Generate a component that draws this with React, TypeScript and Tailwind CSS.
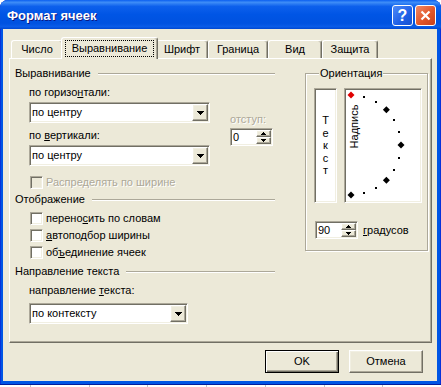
import React from "react";

const raised =
  "border border-t-white border-l-white border-r-[#716F64] border-b-[#716F64] shadow-[inset_-1px_-1px_0_#ACA899,inset_1px_1px_0_#F1EFE2]";
const sunken =
  "border border-t-[#ACA899] border-l-[#ACA899] border-r-white border-b-white shadow-[inset_1px_1px_0_#716F64,inset_-1px_-1px_0_#F1EFE2]";

const ArrowDown = () => (
  <svg width="7" height="4" viewBox="0 0 7 4" shapeRendering="crispEdges">
    <path d="M0 0H7V1H6V2H5V3H4V4H3V3H2V2H1V1H0Z" fill="#000" />
  </svg>
);

const SpinUp = () => (
  <svg width="5" height="3" viewBox="0 0 5 3" shapeRendering="crispEdges">
    <path d="M0 3H5V2H4V1H3V0H2V1H1V2H0Z" fill="#000" />
  </svg>
);

const SpinDown = () => (
  <svg width="5" height="3" viewBox="0 0 5 3" shapeRendering="crispEdges">
    <path d="M0 0H5V1H4V2H3V3H2V2H1V1H0Z" fill="#000" />
  </svg>
);

function Combo({ value, width }: { value: string; width: string }) {
  return (
    <div className={`${width} h-[21px] bg-white ${sunken} p-[1px] flex`}>
      <div className="flex-1 flex items-center pl-[1px]">{value}</div>
      <div className={`w-[16px] bg-[#ECE9D8] ${raised} flex items-center justify-center`}>
        <ArrowDown />
      </div>
    </div>
  );
}

function Spinner({ value }: { value: string }) {
  return (
    <div className={`w-[43px] h-[18px] bg-white ${sunken} p-[1px] flex`}>
      <div className="flex-1 flex items-center pl-[1px]">{value}</div>
      <div className="w-[15px] flex flex-col">
        <div className={`flex-1 bg-[#ECE9D8] ${raised} flex items-center justify-center`}>
          <SpinUp />
        </div>
        <div className={`flex-1 bg-[#ECE9D8] ${raised} flex items-center justify-center`}>
          <SpinDown />
        </div>
      </div>
    </div>
  );
}

function Check({ children, disabled }: { children: React.ReactNode; disabled?: boolean }) {
  return (
    <div className="flex items-center gap-[3px] ml-[15px]">
      <div className={`w-[13px] h-[13px] ${disabled ? "bg-[#ECE9D8]" : "bg-white"} ${sunken}`} />
      <span className={disabled ? "text-[#ACA899] [text-shadow:1px_1px_0_#fff]" : ""}>{children}</span>
    </div>
  );
}

function GroupHead({ title, gap }: { title: string; gap: string }) {
  return (
    <div className="flex items-center">
      <span>{title}</span>
      <div className={`flex-1 ${gap} border-t border-t-[#ACA899] border-b border-b-white`} />
    </div>
  );
}

const tabs = [
  { name: "Число", w: "w-[52px]" },
  { name: "Выравнивание", w: "", active: true },
  { name: "Шрифт", w: "w-[52px]" },
  { name: "Граница", w: "w-[60px]" },
  { name: "Вид", w: "w-[54px]" },
  { name: "Защита", w: "w-[56px]" },
];

function Dial() {
  const pts = [];
  for (let i = 0; i <= 12; i++) {
    const a = (i * 15 * Math.PI) / 180;
    pts.push({ x: 5 + 50 * Math.sin(a), y: 55 - 50 * Math.cos(a), big: i % 3 === 0, red: i === 0 });
  }
  return (
    <svg width="74" height="111" viewBox="0 0 74 111">
      {pts.map((p, i) =>
        p.big ? (
          <path
            key={i}
            d={`M${p.x} ${p.y - 3.5}L${p.x + 3.5} ${p.y}L${p.x} ${p.y + 3.5}L${p.x - 3.5} ${p.y}Z`}
            fill={p.red ? "#E00000" : "#000"}
          />
        ) : (
          <rect key={i} x={Math.round(p.x) - 1} y={Math.round(p.y) - 1} width="2" height="2" fill="#000" />
        )
      )}
      <text
        x="7.5"
        y="36.5"
        transform="rotate(-90 7.5 36.5)"
        textAnchor="middle"
        dominantBaseline="central"
        fontSize="11"
        fontFamily="Liberation Sans, Arial, sans-serif"
      >
        Надпись
      </text>
    </svg>
  );
}

export default function App() {
  return (
    <div className="w-[441px] h-[387px] bg-white font-['Liberation_Sans',Arial,sans-serif] text-[11px] leading-[13px] text-black select-none">
      <div className="h-[385px] flex flex-col rounded-t-[8px] bg-[#0055E5] shadow-[inset_0_-1px_0_#001C9E,inset_1px_0_0_#0831D9,inset_-1px_0_0_#0831D9]">
        {/* Title bar */}
        <div className="h-[29px] rounded-t-[8px] flex items-center pl-[7px] pr-[5px] bg-[linear-gradient(to_bottom,#0A5FF0_0%,#3E8DF7_8%,#0D60EC_22%,#0055E5_50%,#0052E0_80%,#0A5CE8_92%,#0047D0_100%)]">
          <span className="text-white font-bold text-[13px] leading-[16px] mt-[2px] [text-shadow:1px_1px_0_#0A1883]">
            Формат ячеек
          </span>
          <div className="ml-auto flex gap-[2px] mt-[2px]">
            <div className="w-[21px] h-[21px] rounded-[3px] border border-white bg-[linear-gradient(135deg,#4F8BF8,#1E5FE6_60%,#1650D0)] flex items-center justify-center text-white font-bold text-[16px] leading-none">
              ?
            </div>
            <div className="w-[21px] h-[21px] rounded-[3px] border border-white bg-[linear-gradient(135deg,#F08A66,#E2562A_55%,#C8401C)] flex items-center justify-center">
              <svg width="11" height="11" viewBox="0 0 11 11">
                <path d="M1.5 1.5L9.5 9.5M9.5 1.5L1.5 9.5" stroke="#fff" strokeWidth="2.2" />
              </svg>
            </div>
          </div>
        </div>

        {/* Client area */}
        <div className="flex-1 ml-[3px] mr-[4px] mb-[4px] bg-[#ECE9D8] flex flex-col pt-[8px] pl-[6px]">
          {/* Tabs */}
          <div className="h-[21px] flex items-end pl-[2px]">
            {tabs.map((t) =>
              t.active ? (
                <div
                  key={t.name}
                  className="w-[97px] -mx-[2px] h-[22px] -mb-[1px] relative z-10 bg-[#ECE9D8] border-l border-t border-white border-r border-r-[#716F64] rounded-t-[3px] shadow-[inset_-1px_0_0_#ACA899] flex items-center justify-center"
                >
                  <span className="h-[17px] px-[6px] flex items-center border border-dotted border-black">{t.name}</span>
                </div>
              ) : (
                <div
                  key={t.name}
                  className={`${t.w} h-[18px] border-l border-t border-white border-r border-r-[#716F64] rounded-t-[3px] shadow-[inset_-1px_0_0_#ACA899] flex items-center justify-center`}
                >
                  {t.name}
                </div>
              )
            )}
          </div>

          {/* Panel */}
          <div className="w-[423px] h-[285px] bg-[#ECE9D8] border border-t-white border-l-white border-r-[#716F64] border-b-[#716F64] shadow-[inset_-1px_-1px_0_#ACA899] flex pl-[5px] pt-[8px]">
            {/* Left column */}
            <div className="w-[260px] flex flex-col">
              <GroupHead title="Выравнивание" gap="ml-[7px]" />
              <div className="flex">
                <div className="ml-[14px] w-[181px] flex flex-col">
                  <div className="mt-[6px]">
                    по горизо<span className="underline">н</span>тали:
                  </div>
                  <div className="mt-[3px]">
                    <Combo value="по центру" width="w-[181px]" />
                  </div>
                  <div className="mt-[6px]">
                    по <span className="underline">в</span>ертикали:
                  </div>
                  <div className="mt-[3px]">
                    <Combo value="по центру" width="w-[181px]" />
                  </div>
                </div>
                <div className="ml-[20px] flex flex-col pt-[33px]">
                  <span className="text-[#ACA899] [text-shadow:1px_1px_0_#fff]">отступ:</span>
                  <div className="mt-[2px]">
                    <Spinner value="0" />
                  </div>
                </div>
              </div>
              <div className="mt-[10px]">
                <Check disabled>Распределять по ширине</Check>
              </div>

              <div className="mt-[4px]">
                <GroupHead title="Отображение" gap="ml-[7px]" />
              </div>
              <div className="mt-[6px] flex flex-col gap-[4px]">
                <Check>
                  перено<span className="underline">с</span>ить по словам
                </Check>
                <Check>
                  <span className="underline">а</span>втоподбор ширины
                </Check>
                <Check>
                  об<span className="underline">ъ</span>единение ячеек
                </Check>
              </div>

              <div className="mt-[6px]">
                <GroupHead title="Направление текста" gap="ml-[7px]" />
              </div>
              <div className="ml-[14px] mt-[6px]">
                направление <span className="underline">т</span>екста:
              </div>
              <div className="ml-[14px] mt-[6px]">
                <Combo value="по контексту" width="w-[159px]" />
              </div>
            </div>

            {/* Orientation */}
            <fieldset className="ml-[30px] w-[123px] h-[184px] border border-[#ACA899] shadow-[inset_1px_1px_0_#fff,1px_1px_0_#fff] pl-[8px] pt-[8px]">
              <legend className="ml-[5px] px-[1px] bg-[#ECE9D8]">Ориентация</legend>
              <div className="flex gap-[7px]">
                <div className={`w-[23px] h-[115px] bg-white ${sunken} flex flex-col items-center justify-center leading-[12.5px]`}>
                  <span>Т</span>
                  <span>е</span>
                  <span>к</span>
                  <span>с</span>
                  <span>т</span>
                </div>
                <div className={`w-[78px] h-[115px] bg-white ${sunken} p-[1px]`}>
                  <Dial />
                </div>
              </div>
              <div className="flex items-center mt-[18px] ml-[1px]">
                <Spinner value="90" />
                <span className="ml-[5px]">
                  <span className="underline">г</span>радусов
                </span>
              </div>
            </fieldset>
          </div>

          {/* Buttons */}
          <div className="flex justify-end gap-[10px] pr-[14px] mt-[7px]">
            <button className="w-[74px] h-[23px] bg-[#ECE9D8] border border-black shadow-[inset_1px_1px_0_#fff,inset_-1px_-1px_0_#716F64,inset_-2px_-2px_0_#ACA899]">
              OK
            </button>
            <button className={`w-[74px] h-[23px] bg-[#ECE9D8] ${raised}`}>Отмена</button>
          </div>
        </div>
      </div>
      <div className="h-[2px] flex pl-[30px]">
        {[0, 1, 2, 3, 4, 5, 6].map((i) => (
          <div key={i} className="w-[64px] border-l border-[#C0C0C0]" />
        ))}
      </div>
    </div>
  );
}
